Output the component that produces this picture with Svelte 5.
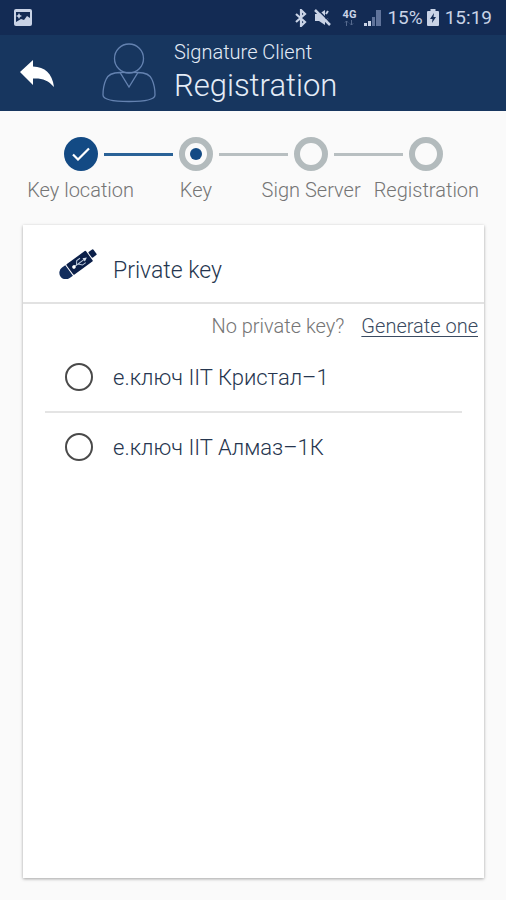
<script>
  const steps = [
    { label: 'Key location', status: 'done' },
    { label: 'Key', status: 'current' },
    { label: 'Sign Server', status: 'pending' },
    { label: 'Registration', status: 'pending' }
  ];

  const keys = ['е.ключ ІІТ Кристал–1', 'е.ключ ІІТ Алмаз–1К'];

  let selectedKey = $state('');

  function lineReached(index) {
    return index >= 0 && steps[index].status === 'done';
  }
</script>

<div class="screen">
  <div class="status-bar">
    <svg viewBox="0 0 18 17" width="18" height="17">
      <rect width="18" height="17" rx="2" fill="#c9d3e6" />
      <path d="M2 3h14v6l-3-2-3 4-3-1-5 3z" fill="#132b54" />
      <path d="M5 4l1 2 2 1-2 1-1 2-1-2-2-1 2-1z" fill="#c9d3e6" />
    </svg>
    <div class="status-icons">
      <svg viewBox="0 0 12 18" width="12" height="18">
        <path d="M1 5l9 8-4 4V1l4 4-9 8" fill="none" stroke="#c9d3e6" stroke-width="2.2" />
      </svg>
      <svg class="mute-icon" viewBox="0 0 17 17" width="17" height="17">
        <path d="M1 5h4l6-4v15l-6-4H1z" fill="#c9d3e6" />
        <path d="M12 5l2-3M12 10l2 1" stroke="#c9d3e6" stroke-width="2" />
        <path d="M3 0l14 14" stroke="#132b54" stroke-width="1.5" />
        <path d="M1 1l15 15" stroke="#c9d3e6" stroke-width="2.5" />
      </svg>
      <div class="network">
        <span>4G</span>
        <svg viewBox="0 0 10 6" width="10" height="6">
          <path d="M2.5 6V1M1 2.5L2.5 1 4 2.5M7.5 0v5M6 3.5L7.5 5 9 3.5" fill="none" stroke="#566a8e" />
        </svg>
      </div>
      <svg viewBox="0 0 17 17" width="17" height="17">
        <path d="M0 17v-3h3v3zM4 17v-5h3v5z" fill="#c9d3e6" />
        <path d="M8 17V8h3v9zM12 17V1h5v16z" fill="#60739a" />
      </svg>
      <span class="battery">15%</span>
      <svg class="battery-icon" viewBox="0 0 12 17" width="12" height="17">
        <path d="M1 2h2.500V0h5v2H11a1 1 0 0 1 1 1v13a1 1 0 0 1-1 1H1a1 1 0 0 1-1-1V3a1 1 0 0 1 1-1z" fill="#c9d3e6" />
        <path d="M7 4L3 10h2.500L5 14l4-6H6.500z" fill="#132b54" />
      </svg>
      <span>15:19</span>
    </div>
  </div>

  <header>
    <button class="back" aria-label="Back">
      <svg viewBox="0 0 34 27" width="34" height="27">
        <path d="M0 12L13 0v6.500C25 7 32 13 34 27 28 20 22 18 13 18.500V25z" fill="#fff" />
      </svg>
    </button>
    <svg class="person" viewBox="0 0 54 60" width="54" height="60">
      <g fill="none" stroke="#6482b0" stroke-width="1.3">
        <circle cx="27" cy="15.500" r="14.500" />
        <path d="M18 29.500c-8 0-12 2-14 7C2 41 1 46 1 52c0 5 10 6.500 26 6.500S53 57 53 52c0-6-1-11-3-15.500-2-5-6-7-14-7l-9 14.500z" />
        <path d="M18 29.500h18" />
      </g>
    </svg>
    <div class="titles">
      <span>Signature Client</span>
      <h1>Registration</h1>
    </div>
  </header>

  <main>
    <ol class="steps">
      {#each steps as step, i}
        <li>
          <div class="track">
            <span class="line" class:hidden={i === 0} class:reached={lineReached(i - 1)}></span>
            <span class="circle {step.status}">
              {#if step.status === 'done'}
                <svg viewBox="0 0 18 14" width="18" height="14">
                  <path d="M1 7.500L6 12.500 17 1.500" fill="none" stroke="#fff" stroke-width="2.2" />
                </svg>
              {/if}
            </span>
            <span class="line" class:hidden={i === steps.length - 1} class:reached={lineReached(i)}></span>
          </div>
          <span class="step-label">{step.label}</span>
        </li>
      {/each}
    </ol>

    <section class="card">
      <div class="card-header">
        <svg viewBox="0 0 38 30" width="38" height="30">
          <g transform="rotate(-36 19 15)">
            <path d="M4 8.500h4v13H4a6.500 6.500 0 0 1 0-13z" fill="#112c5c" />
            <rect x="9" y="8.500" width="24" height="13" rx="1" fill="#0b1f49" />
            <rect x="34" y="11.500" width="6" height="7" rx="1" fill="#0b1f49" />
            <path d="M13 15h15M17 15l3-3.500h4M19 15l3 3.500h4" fill="none" stroke="#b9c8dc" />
            <circle cx="14" cy="15" r="1.800" fill="#fff" />
            <path d="M26 13l4 2-4 2z" fill="#d5dfec" />
          </g>
        </svg>
        <h2>Private key</h2>
      </div>

      <div class="generate">
        <span>No private key?</span>
        <a href="#generate">Generate one</a>
      </div>

      <div class="keys">
        {#each keys as key}
          <label>
            <input type="radio" name="key" value={key} bind:group={selectedKey} />
            <span>{key}</span>
          </label>
        {/each}
      </div>
    </section>
  </main>
</div>

<style>
  :global(body) {
    margin: 0;
    background-color: #fafafa;
  }

  .screen {
    display: flex;
    flex-direction: column;
    min-height: 100vh;
    font-family: Roboto, "Noto Sans", sans-serif;
    font-weight: 300;
  }

  .status-bar {
    display: flex;
    align-items: center;
    justify-content: space-between;
    height: 35px;
    padding: 0 14px;
    box-sizing: border-box;
    background-color: #132b54;
    color: #c9d3e6;
    font-size: 19px;
    font-weight: 400;
  }

  .status-icons {
    display: flex;
    align-items: center;
  }

  .mute-icon {
    margin-left: 7px;
  }

  .network {
    display: flex;
    flex-direction: column;
    align-items: center;
    margin: 0 8px 0 12px;
    font-size: 11px;
    font-weight: 700;
    line-height: 10px;
  }

  .battery {
    margin-left: 6px;
  }

  .battery-icon {
    margin: 0 6px 0 4px;
  }

  header {
    display: flex;
    align-items: center;
    height: 76px;
    padding-left: 20px;
    background-color: #17365f;
    color: #e4ecf7;
  }

  .back {
    display: flex;
    padding: 0;
    border: none;
    background: none;
    cursor: pointer;
  }

  .person {
    margin: 0 18px 0 48px;
  }

  .titles {
    display: flex;
    flex-direction: column;
    padding-top: 2px;
    font-size: 20px;
    line-height: 24px;
  }

  h1 {
    margin: 0;
    font-size: 31px;
    font-weight: 300;
    line-height: 44px;
  }

  main {
    display: flex;
    flex: 1;
    flex-direction: column;
    padding: 26px 22px 22px 23px;
  }

  .steps {
    display: grid;
    grid-template-columns: repeat(4, 1fr);
    margin: 0 0 22px;
    padding: 0;
    list-style: none;
  }

  .steps li {
    display: flex;
    flex-direction: column;
    align-items: center;
  }

  .track {
    display: flex;
    align-items: center;
    gap: 6px;
    width: 100%;
  }

  .line {
    flex: 1;
    height: 3px;
    background-color: #b8bfc1;
  }

  .line.reached {
    background-color: #2a6297;
  }

  .line.hidden {
    visibility: hidden;
  }

  .circle {
    display: flex;
    align-items: center;
    justify-content: center;
    width: 34px;
    height: 34px;
    box-sizing: border-box;
    border: 6px solid #b3bbbd;
    border-radius: 50%;
  }

  .circle.done {
    border: none;
    background-color: #134a84;
  }

  .circle.current::before {
    content: '';
    width: 12px;
    height: 12px;
    border-radius: 50%;
    background-color: #134a84;
  }

  .step-label {
    margin-top: 6px;
    color: #757575;
    font-size: 20px;
    line-height: 26px;
    white-space: nowrap;
  }

  .card {
    flex: 1;
    background-color: #fff;
    box-shadow: 0 1px 3px rgba(0, 0, 0, 0.35);
  }

  .card-header {
    display: flex;
    align-items: center;
    gap: 16px;
    height: 77px;
    padding-left: 36px;
    border-bottom: 2px solid #e2e2e2;
  }

  h2 {
    margin: 14px 0 0;
    color: #26364f;
    font-size: 23px;
    font-weight: 300;
    line-height: 28px;
  }

  .generate {
    display: flex;
    justify-content: flex-end;
    gap: 17px;
    padding: 9px 6px 0 0;
    color: #757575;
    font-size: 20px;
    line-height: 26px;
  }

  .generate a {
    color: #3a4a60;
    text-decoration-thickness: 1px;
    text-underline-offset: 3px;
  }

  .keys {
    padding: 4px 22px 0;
  }

  .keys label {
    display: flex;
    align-items: center;
    gap: 20px;
    height: 68px;
    padding-left: 20px;
    color: #26364f;
    font-size: 22px;
    cursor: pointer;
  }

  .keys label + label {
    border-top: 2px solid #e4e4e4;
  }

  input {
    appearance: none;
    width: 28px;
    height: 28px;
    margin: 0;
    border: 2px solid #4a4a4a;
    border-radius: 50%;
    cursor: pointer;
  }

  input:checked {
    background: radial-gradient(#134a84 0 7px, transparent 8px);
  }
</style>
